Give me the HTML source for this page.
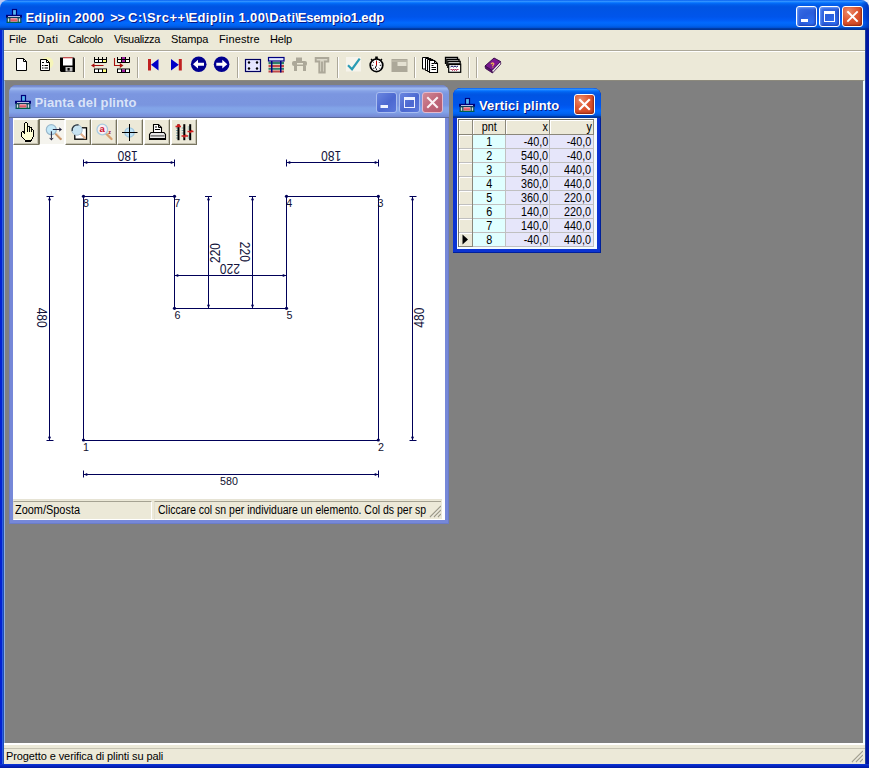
<!DOCTYPE html>
<html><head><meta charset="utf-8"><title>Ediplin 2000</title>
<style>
*{box-sizing:border-box;margin:0;padding:0}
html,body{width:869px;height:768px;overflow:hidden;background:#0831d9}
body{position:relative;font-family:"Liberation Sans",sans-serif;font-size:11px;color:#000}
.abs{position:absolute}
svg{position:absolute;overflow:visible}
#frame{left:0;top:0;width:869px;height:768px;background:linear-gradient(to right,#0322d2 0,#0322d2 2px,#2d5fe0 2px,#2d5fe0 3px,#1f4db6 3px,#1f4db6 4px,#0a33e0 4px,#0a33e0 865px,#1f3f9a 865px,#1f3f9a 866px,#0016a2 866px)}
#frameb{left:0;top:764px;width:869px;height:4px;background:linear-gradient(to bottom,#0c38d6,#0322c0 50%,#001a9c)}
#title{left:0;top:0;width:869px;height:30px;border-radius:8px 8px 0 0;
 background:linear-gradient(to bottom,#0058ee 0%,#3593ff 4%,#288eff 6%,#127dff 8%,#036ffc 10%,#0262ee 14%,#0057e5 20%,#0054e3 24%,#0055eb 56%,#005bf5 66%,#026afe 76%,#0062ef 86%,#0052d6 92%,#0040ab 94%,#003092 100%)}
.ttext{position:absolute;font-weight:bold;color:#fff;white-space:nowrap;text-shadow:1px 1px 0 #0a1883}
#menubar{left:4px;top:30px;width:861px;height:20px;background:#ece9d8}
.mi{position:absolute;top:3px;white-space:nowrap;font-size:11px}
#toolbar{left:4px;top:50px;width:861px;height:31px;background:#ece9d8;border-top:1px solid #aca899}
#toolbar:before{content:"";position:absolute;left:0;top:0;width:100%;height:1px;background:#fff}
#mdi{left:4px;top:80px;width:861px;height:663px;background:#808080;border-top:1px solid #8c897c;border-left:1px solid #8fafdd;border-right:2px solid #f0feff}
#status{left:4px;top:743px;width:861px;height:21px;background:#ece9d8;border-top:2px solid #fff}
#status:before{content:"";position:absolute;left:0;top:3px;width:100%;height:1px;background:#c5c2b2}
.sep{position:absolute;top:6px;width:2px;height:21px;border-left:1px solid #aca899;border-right:1px solid #fff}
.cbtn{position:absolute;width:21px;height:21px;border:1px solid #fff;border-radius:3px}
.cb-blue{background:radial-gradient(circle at 75% 80%,#2f6df0 0%,#2a5ddb 45%,#3a6fe8 100%);box-shadow:inset 1px 1px 2px #6f9df8, inset -1px -1px 2px #1c3eb0}
.cb-red{background:radial-gradient(circle at 30% 25%,#ea8c6c 0%,#de5630 45%,#c8401e 100%);box-shadow:inset -1px -1px 2px #8f2610}
</style></head><body>
<svg width="0" height="0" style="left:0;top:0"><defs>
<g id="appico">
<rect x="6.500" y="1.500" width="4" height="6" fill="#58b8f0" stroke="#000078" stroke-width="1.200"/>
<rect x="0" y="6.800" width="16" height="3" fill="#000078"/>
<rect x="2" y="8" width="12" height=".8" fill="#e8eeff"/>
<rect x="1.200" y="9.800" width="13.600" height="4.600" fill="#d8e0e0" stroke="#003c48" stroke-width="1.100"/>
<rect x="4.300" y="10.300" width="7" height="3.200" fill="#e05868"/>
<rect x="4.300" y="10.300" width="7" height="1" fill="#f4b0b8"/>
<rect x="3.300" y="9.800" width="1" height="4.600" fill="#003c48"/><rect x="11.700" y="9.800" width="1" height="4.600" fill="#003c48"/>
<rect x=".800" y="13.900" width="14.400" height="1.100" fill="#006048"/>
</g>
</defs></svg>
<div id="frame" class="abs"></div><div id="frameb" class="abs"></div>
<div class="abs" style="left:0;top:0;width:8px;height:8px;background:#b9c8f5"></div><div class="abs" style="right:0;top:0;width:8px;height:8px;background:#e8eefc"></div>
<div id="title" class="abs"></div><div class="abs" style="left:861px;top:0;width:8px;height:30px;border-radius:0 8px 0 0;background:linear-gradient(to right,rgba(0,20,150,0),rgba(0,20,150,.55))"></div>
<svg width="16" height="16" viewBox="0 0 16 16" style="left:6px;top:8px"><use href="#appico"/></svg>
<div class="ttext" id="maintitle" style="left:0;top:10px;font-size:13px;width:400px;height:16px">
<span class="abs" style="left:25.400px;letter-spacing:.27px">Ediplin 2000</span>
<span class="abs" style="left:110.300px;letter-spacing:-.3px">&gt;&gt;</span>
<span class="abs" style="left:128.100px;letter-spacing:.5px">C:\Src++\</span>
<span class="abs" style="left:188.500px;letter-spacing:.38px">Ediplin 1.00\Dati\</span>
<span class="abs" style="left:297.700px;letter-spacing:-.15px">Esempio1.edp</span>
</div>
<div class="cbtn cb-blue" style="left:796px;top:6px"><svg width="21" height="21" style="left:-1px;top:-1px"><rect x="5" y="13" width="7" height="3" fill="#fff"/></svg></div>
<div class="cbtn cb-blue" style="left:819px;top:6px"><svg width="21" height="21" style="left:-1px;top:-1px"><rect x="5.5" y="6.5" width="10" height="9" fill="none" stroke="#fff"/><rect x="5" y="5" width="11" height="3" fill="#fff"/></svg></div>
<div class="cbtn cb-red" style="left:842px;top:6px"><svg width="21" height="21" style="left:-1px;top:-1px"><path d="M6 6 L15 15 M15 6 L6 15" stroke="#fff" stroke-width="1.900" stroke-linecap="square"/></svg></div>
<div id="menubar" class="abs">
<span class="mi" style="left:5px">File</span>
<span class="mi" style="left:33px;letter-spacing:.5px">Dati</span>
<span class="mi" style="left:64px;letter-spacing:-.25px">Calcolo</span>
<span class="mi" style="left:110px;letter-spacing:-.33px">Visualizza</span>
<span class="mi" style="left:167px;letter-spacing:-.1px">Stampa</span>
<span class="mi" style="left:215px;letter-spacing:.14px">Finestre</span>
<span class="mi" style="left:266px;letter-spacing:-.17px">Help</span>
</div>
<div id="toolbar" class="abs">
<div class="sep" style="left:79px"></div>
<div class="sep" style="left:133px"></div>
<div class="sep" style="left:233px"></div>
<div class="sep" style="left:333px"></div>
<div class="sep" style="left:410px"></div>
<div class="sep" style="left:464px"></div>
<div class="sep" style="left:472px"></div>
</div>
<div id="mdi" class="abs"></div>
<div id="status" class="abs"><span class="abs" id="stxt" style="left:2px;top:5px;white-space:nowrap;letter-spacing:-.1px">Progetto e verifica di plinti su pali</span>
<svg width="13" height="13" style="right:1px;bottom:1px"><path d="M13 1 L2 12 M13 5 L6 12 M13 9 L10 12" stroke="#fff" stroke-width="1"/><path d="M12 1 L1 12 M12 5 L5 12 M12 9 L9 12" stroke="#a5a290" stroke-width="1.300"/></svg></div>
<svg width="869" height="768" viewBox="0 0 869 768" style="left:0;top:0;pointer-events:none" shape-rendering="auto">
<!-- new -->
<path d="M16.500 58.500 H23.500 L26.500 61.500 V70.500 H16.500 Z" fill="#fff" stroke="#000" stroke-width="1"/>
<path d="M23.500 58.500 V61.500 H26.500" fill="none" stroke="#000" stroke-width="1"/>
<!-- doc with lines -->
<ellipse cx="47" cy="63" rx="6.5" ry="6" fill="#ffffa0" opacity=".55"/>
<path d="M40.500 59.500 H46.500 L49.500 62.500 V70.500 H40.500 Z" fill="#fff" stroke="#000" stroke-width="1"/>
<path d="M46.500 59.500 V62.500 H49.500" fill="none" stroke="#000" stroke-width="1"/>
<path d="M42 62.5 H44 M42 65.5 H43.5 M44.5 65.5 H48 M42 68 H43.5 M44.5 68 H48" stroke="#000" stroke-width="1"/>
<!-- save -->
<path d="M60 57.5 H74 L75 58.5 V72 H61 L60 71 Z" fill="#000"/>
<rect x="63" y="58" width="9.5" height="7.5" fill="#fff"/>
<rect x="63" y="57.3" width="9.5" height="1" fill="#e04040"/>
<rect x="65.5" y="67" width="7" height="4.5" fill="#c0c0c0"/>
<rect x="67.5" y="68" width="2.2" height="2.6" fill="#000"/>
<!-- table-arrow icon 1 -->
<g>
<rect x="94" y="59" width="13" height="3.5" fill="#fff"/><rect x="102.5" y="59" width="4" height="3.5" fill="#ffff80"/>
<path d="M94.5 57 V62.5 H106.5 V57 M98.5 57 V62.5 M102.5 57 V62.5 M94.5 59.5 H106.5" fill="none" stroke="#000" stroke-width="1"/>
<rect x="94.5" y="69" width="12" height="3.5" fill="#fff" stroke="#000"/><rect x="102.5" y="69.5" width="3.5" height="2.5" fill="#ffff80"/>
<path d="M98.5 69 V72.5 M102.5 69 V72.5" stroke="#000"/>
<path d="M91 65.500 L94.500 63.200 V65 H103.500 V66 H94.500 V67.800 Z" fill="#a81010"/>
</g>
<!-- table-arrow icon 2 -->
<g>
<rect x="117.5" y="59" width="12" height="3.5" fill="#fff"/><rect x="121.5" y="57" width="4" height="5.5" fill="#a020a0"/>
<path d="M117.5 57 V62.5 H129.5 V57 M121.5 57 V62.5 M125.5 57 V62.5 M117.5 59.5 H129.5" fill="none" stroke="#000" stroke-width="1"/>
<rect x="117.5" y="69" width="12" height="3.5" fill="#fff" stroke="#000"/><rect x="121.5" y="69.5" width="4" height="2.5" fill="#a020a0"/>
<path d="M121.500 69 V72.5 M125.5 69 V72.5" stroke="#000"/>
<path d="M114.500 58 V65.500 H120" fill="none" stroke="#a81010" stroke-width="1.100"/>
<path d="M123.500 65.500 L119.800 63 V68 Z" fill="#a81010"/>
</g>
<!-- first -->
<rect x="148" y="59" width="3" height="11.500" fill="#c02020"/>
<path d="M158.500 59 V70.500 L151 64.750 Z" fill="#0000c8"/>
<!-- last -->
<rect x="178.800" y="59" width="3" height="11.500" fill="#c02020"/>
<path d="M171 59 V70.500 L178.800 64.750 Z" fill="#0000c8"/>
<!-- left circle -->
<circle cx="198.700" cy="64.200" r="7.800" fill="#000090"/>
<path d="M193 64.200 L198 59.800 V62.700 H204 V65.700 H198 V68.600 Z" fill="#fff"/>
<!-- right circle -->
<circle cx="221.600" cy="64.200" r="7.800" fill="#000090"/>
<path d="M227.300 64.200 L222.300 59.800 V62.700 H216.300 V65.700 H222.300 V68.600 Z" fill="#fff"/>
<!-- rect 4 dots -->
<rect x="245.500" y="59.500" width="15" height="12" fill="#e6e6ff" stroke="#000060" stroke-width="1.200"/>
<circle cx="249" cy="62.500" r="1.200" fill="#000"/><circle cx="257" cy="62.500" r="1.200" fill="#000"/>
<circle cx="249" cy="68.500" r="1.200" fill="#000"/><circle cx="257" cy="68.500" r="1.200" fill="#000"/>
<!-- striped structure -->
<g>
<rect x="268.500" y="57.500" width="15.500" height="3.500" fill="#e0e8ff" stroke="#000080" stroke-width="1.200"/>
<rect x="268.500" y="62" width="15.500" height="2.200" fill="#2e7d6b"/>
<rect x="268.500" y="65" width="15.500" height="2.300" fill="#c04848"/>
<rect x="268.500" y="68" width="15.500" height="1.800" fill="#2e7d6b"/>
<rect x="268.500" y="70.500" width="15.500" height="2" fill="#c04848"/>
<rect x="271" y="61" width="1.500" height="11.500" fill="#000080"/>
<rect x="280" y="61" width="1.500" height="11.500" fill="#000080"/>
</g>
<!-- gray plinth (disabled) -->
<g fill="#aca899">
<rect x="296" y="57.500" width="6" height="3.500"/>
<rect x="292" y="61" width="15" height="5" rx="2"/>
<rect x="294" y="66" width="3" height="5"/><rect x="303" y="66" width="3" height="5"/>
<rect x="297" y="63" width="6" height="1.500" fill="#ece9d8"/>
</g>
<!-- gray double T -->
<g fill="#dcd9ca" stroke="#aca899" stroke-width="1.900">
<path d="M315.700 58 H328.300 V61.500 H324.700 V72.500 H319.300 V61.500 H315.700 Z M322 61.500 V72.500"/>
</g>
<!-- check -->
<rect x="346" y="57" width="15" height="14.500" fill="#f6f4ec"/>
<path d="M348 65.300 L352 69.200 L359.700 58.600" fill="none" stroke="#2a9cb4" stroke-width="2.200"/>
<!-- stopwatch -->
<g>
<rect x="375.200" y="56.500" width="2.600" height="2.500" fill="#000"/>
<path d="M371 59 L372.500 60.500 M382 59 L380.500 60.500" stroke="#000" stroke-width="1.400"/>
<circle cx="376.500" cy="65.300" r="6.300" fill="#fff" stroke="#000" stroke-width="1.700"/>
<path d="M376.500 60.500 V62 M376.500 68.500 V70 M371.700 65.300 H373.200 M379.800 65.300 H381.300 M373.200 62 L374 62.800 M379.800 62 L379 62.800 M373.200 68.600 L374 67.800 M379.800 68.600 L379 67.800" stroke="#000" stroke-width=".9"/>
<path d="M376.500 65.300 V61" stroke="#c00000" stroke-width="1"/><path d="M376.500 65.300 L375 68.500" stroke="#000" stroke-width="1"/>
</g>
<!-- gray window icon -->
<rect x="391.500" y="59" width="16" height="13" fill="#aca899"/>
<rect x="397.500" y="62" width="9" height="4" fill="#e4e1d2"/>
<rect x="391.500" y="60.500" width="16" height="1" fill="#c9c6b6"/>
<!-- stacked docs -->
<g stroke="#000" stroke-width="1" fill="#fff">
<path d="M422.500 57.500 H428.500 L430 59 V69 H422.500 Z"/>
<path d="M425.500 58.500 H431 L432.500 60 V70.500 H425.500 Z"/>
<path d="M427.500 59.500 H433 L435 61.500 V71.500 H427.500 Z"/>
<path d="M429.500 60.500 H434.500 L437.500 63.500 V72.500 H429.500 Z" stroke-width="1.100"/>
<path d="M434.500 60.500 V63.500 H437.500" fill="none"/>
<path d="M431.500 63.500 H434 M431.500 65.500 H433.500 M431.500 67.500 H436 M431.500 69.500 H436" fill="none" stroke-width="1"/>
</g>
<!-- stacked windows -->
<g stroke="#000" stroke-width="1" fill="#fff">
<path d="M445.500 64 V57.500 H457.500 V59" stroke-width="1.300"/>
<path d="M446.800 66 V59.500 H459 V61" stroke-width="1.300"/>
<path d="M447.800 68 V61.500 H460.200 V63.500" stroke-width="1.300"/>
<rect x="448.700" y="64" width="12" height="8.300" stroke-width="1.200"/>
<rect x="448.700" y="63.500" width="12" height="1.600" fill="#000" stroke="none"/>
<path d="M450.500 67 L452 66 L453.500 67 L455 66 L456.500 67 L458 66" stroke="#101060" stroke-width="1" fill="none"/>
<path d="M450.500 70 L451.500 69 L452.500 70.500 L453.500 69 L454.500 70.500 L455.500 69 L456.500 70.500 L457.500 69 L458.500 70" stroke="#b01848" stroke-width="1" fill="none"/>
</g>
<!-- help book -->
<g>
<path d="M485 66 L494 58 L500.500 61.500 L492 70.500 Z" fill="#7a1890" stroke="#3a0a4a" stroke-width="1"/>
<path d="M485 66 L492 70.500 L492.500 73 L485.500 68.500 Z" fill="#5a1070" stroke="#3a0a4a" stroke-width=".8"/>
<path d="M492 70.500 L500.500 61.500 L500.800 64 L492.500 73 Z" fill="#f0e8f0" stroke="#3a0a4a" stroke-width=".8"/>
<text x="490.500" y="67.500" font-family="Liberation Sans, sans-serif" font-size="7" font-weight="bold" fill="#ffd040" transform="rotate(-8 492 65)">?</text>
</g>
</svg>

<style>
.win{position:absolute;border-radius:8px 8px 0 0}
.win1{left:9px;top:85px;width:440px;height:439px;background:#7688d8;box-shadow:inset 1px 0 0 #6b7cc8, inset -1px -1px 0 #6b7cc8}
.win1 .tb{position:absolute;left:0;top:0;width:100%;height:33px;border-radius:8px 8px 0 0;border-bottom:1px solid #5d6c9c;
 background:linear-gradient(to bottom,#6f84c4 0px,#7e93d6 2px,#9db8f0 3px,#9bb6ee 4px,#86a2e6 6px,#7b96e0 9px,#7a95df 20px,#82a4e8 23px,#82a3e7 27px,#7a92dc 30px,#7488d2 32px)}
.win1 .client{position:absolute;left:4px;top:33px;width:432px;height:402px;background:#fff}
.ib{position:absolute;width:21px;height:21px;border-radius:3px;border:1px solid #a9bdf0}
.ib-b{background:linear-gradient(135deg,#6a86e0 0%,#4c68d0 55%,#5a78dc 100%)}
.ib-r{background:linear-gradient(135deg,#d08a98 0%,#be6478 55%,#b45a70 100%);border-color:#e4b8cc}
.tbtn{position:absolute;top:1px;width:26px;height:26px;background:#ece9d8;border-top:1px solid #fff;border-left:1px solid #fff;border-right:1px solid #77745f;border-bottom:1px solid #77745f;box-shadow:inset -1px -1px 0 #c5c2b2}
.tbtn.down{background:#f5f4ee;border-top:1px solid #77745f;border-left:1px solid #77745f;border-right:1px solid #fff;border-bottom:1px solid #fff;box-shadow:none}
.sbp{position:absolute;top:1px;height:19px;border-top:1px solid #a5a292;border-left:1px solid #e2dfd0;border-right:1px solid #fff;border-bottom:1px solid #fff;white-space:nowrap;overflow:hidden;font-size:12px;line-height:16px;padding-left:1px}
.sbp span{display:inline-block;transform-origin:0 50%}
</style>
<div class="win win1">
 <div class="tb"></div>
 <svg width="16" height="16" viewBox="0 0 16 16" style="left:6px;top:9px"><use href="#appico"/></svg>
 <div class="ttext" id="t1" style="left:25.500px;top:10.300px;font-size:13px;color:#d9e3f8;text-shadow:none;letter-spacing:.1px">Pianta del plinto</div>
 <div class="ib ib-b" style="left:367px;top:7px"><svg width="21" height="21" style="left:-1px;top:-1px"><rect x="4.500" y="13" width="7.500" height="3" fill="#eef2ff"/></svg></div>
 <div class="ib ib-b" style="left:390px;top:7px"><svg width="21" height="21" style="left:-1px;top:-1px"><rect x="5.500" y="6.500" width="10" height="9" fill="none" stroke="#eef2ff"/><rect x="5" y="5" width="11" height="3" fill="#eef2ff"/></svg></div>
 <div class="ib ib-r" style="left:413px;top:7px"><svg width="21" height="21" style="left:-1px;top:-1px"><path d="M6 6 L15 15 M15 6 L6 15" stroke="#fbf0f4" stroke-width="2.100" stroke-linecap="square"/></svg></div>
 <div class="client">
  <div class="abs" style="left:0;top:0;width:185px;height:27px;background:#fff">
   <div class="tbtn" style="left:0px"></div>
   <div class="tbtn down" style="left:26px"></div>
   <div class="tbtn" style="left:52px"></div>
   <div class="tbtn" style="left:78px"></div>
   <div class="tbtn" style="left:104px"></div>
   <div class="tbtn" style="left:130.5px"></div>
   <div class="tbtn" style="left:157.5px"></div>
  </div>
  <div class="abs" style="left:0;top:381px;width:429px;height:20px;background:#ece9d8;border-top:1px solid #e6e3d4">
   <div class="sbp" style="left:0;width:139px"><span id="sb1" style="transform:scaleX(.911)">Zoom/Sposta</span></div>
   <div class="sbp" style="left:141px;width:287px;padding-left:3px;border-right:none"><span id="sb2" style="transform:scaleX(.874)">Cliccare col sn per individuare un elemento. Col ds per sp</span></div>
   <svg width="13" height="13" style="right:0px;bottom:1px"><path d="M13 1 L2 12 M13 5 L6 12 M13 9 L10 12" stroke="#fff" stroke-width="1"/><path d="M12 1 L1 12 M12 5 L5 12 M12 9 L9 12" stroke="#9e9b8a" stroke-width="1.300"/></svg>
  </div>
 </div>
</div>
<svg width="869" height="768" viewBox="0 0 869 768" style="left:0;top:0;pointer-events:none">
<!-- hand -->
<g shape-rendering="crispEdges">
<path d="M24.500 133.500 V123.500 H25.500 V122.500 H26.500 V123.500 H27.500 V126.500 H29.500 V127.500 H31.500 V128.500 H32.500 V129.500 H33.500 V136.500 H32.500 V138.500 H31.500 V140.500 H25.500 V139.500 H24.500 V138.500 H23.500 V137.500 H22.500 V136.500 H21.500 V131.500 H23.500 V132.500 H24.500 Z" fill="#ffffd4" stroke="none"/>
<path d="M24 123 h1 v11 h-1 z M25 122 h2 v1 h-2 z M27 123 h1 v9 h-1 z M28 126 h2 v1 h-2 z M29 127 h1 v5 h-1 z M30 127 h2 v1 h-2 z M31 128 h1 v4 h-1 z M32 129 h1 v1 h-1 z M33 130 h1 v7 h-1 z M32 137 h1 v2 h-1 z M31 139 h1 v2 h-1 z M22 131 h2 v1 h-2 z M21 132 h1 v5 h-1 z M23 132 h1 v1 h-1 z M22 137 h1 v1 h-1 z M23 138 h1 v1 h-1 z M24 139 h1 v1 h-1 z M25 140 h1 v1 h-1 z" fill="#000"/>
<rect x="25" y="140" width="6" height="2" fill="#000"/>
</g>
<!-- zoom with arrows -->
<path d="M56 134 L60.700 139" stroke="#c89468" stroke-width="2.400" stroke-linecap="round"/>
<path d="M56 133 L61 138" stroke="#f0c8b0" stroke-width=".8"/>
<circle cx="51.300" cy="129.700" r="5" fill="#c4e8f8" stroke="#9ab8cc" stroke-width="1.200"/>
<path d="M52.800 129.500 H60 M51.400 131.300 V138.500" stroke="#20203c" stroke-width="1" fill="none"/>
<path d="M62 129.500 L59 127.200 L59.600 129.500 L59 131.800 Z M51.400 140.600 L49 137.800 L51.400 138.400 L53.800 137.800 Z" fill="#20203c"/>
<!-- zoom window -->
<rect x="74.800" y="127.800" width="11.700" height="11.400" fill="#fff" stroke="#000" stroke-width="1.300"/>
<path d="M80 133 L85 138" stroke="#e0b090" stroke-width="2.200" stroke-linecap="round"/>
<circle cx="77" cy="130" r="5.200" fill="#c8e4f2" stroke="#a8c0d0" stroke-width="1"/>
<path d="M72.200 131 A5.200 5.200 0 0 1 78.500 125" stroke="#303840" stroke-width="1.400" fill="none"/>
<!-- zoom text -->
<path d="M106 133.500 L111.500 139" stroke="#d8a070" stroke-width="2.300" stroke-linecap="round"/>
<circle cx="102.300" cy="129.500" r="5.300" fill="#fbeef2" stroke="#a8cce0" stroke-width="1.300"/>
<text x="99.600" y="132.300" style="font-family:'Liberation Sans',sans-serif" font-size="9.500" font-weight="bold" fill="#c81030">a</text>
<text x="108.300" y="133.500" style="font-family:'Liberation Sans',sans-serif" font-size="5.500" font-weight="bold" fill="#a01030">z</text>
<!-- crosshair -->
<circle cx="129.500" cy="132.400" r="4.600" fill="#bfe2f5" stroke="#9cc6e0" stroke-width="1.300"/>
<path d="M122 132.500 H137.500 M129.500 124 V141" stroke="#000" stroke-width="1"/>
<!-- printer -->
<path d="M153.500 132.500 V124.500 H158.500 L161.500 127.500 V132.500" fill="#fff" stroke="#000" stroke-width="1.100"/>
<path d="M158.500 124.500 V127.500 H161.500" fill="none" stroke="#000"/>
<path d="M155 127 H157 M155 129.500 H160" stroke="#000" stroke-width="1"/>
<path d="M151 132.500 H164 L165.500 134.500 V139.500 H149.500 V134.500 Z" fill="#e8e8e8" stroke="#000" stroke-width="1.100"/>
<rect x="150.500" y="135" width="14" height="1.700" fill="#808080"/>
<rect x="149.500" y="138" width="16" height="1.800" fill="#000"/>
<!-- bars -->
<g>
<path d="M176 128 H178 M176 130.500 H178 M176 133 H178 M176 135.500 H178 M176 138 H178 M181.700 128 H183.700 M181.700 130.500 H183.700 M181.700 133 H183.700 M187.700 127 H189.700 M187.700 129 H189.700 M187.700 136 H189.700 M187.700 138 H189.700" stroke="#7098a0" stroke-width=".9"/>
<rect x="177.500" y="124.200" width="2" height="16" fill="#000"/>
<rect x="183.300" y="124.200" width="2" height="16" fill="#000"/>
<rect x="189.200" y="124.200" width="2" height="16" fill="#000"/>
<path d="M175.500 126.500 H181 M178.500 124.500 L176.500 127 M178.500 124.500 L180.500 127" stroke="#d02020" stroke-width="1.300" fill="none"/>
<path d="M187.500 131.500 H193.500 M190 133 L192 130" stroke="#d02020" stroke-width="1.300"/>
<path d="M181.500 136 H188 M184 137.500 L186 134.500" stroke="#d02020" stroke-width="1.300"/>
</g>
</svg>
<svg width="869" height="768" viewBox="0 0 869 768" style="left:0;top:0" font-family="Liberation Sans, sans-serif" font-size="10.7">
<g fill="none" stroke="#000058" stroke-width="1">
<!-- plinth outline -->
<path d="M83.500 440.500 H378.500 V196.500 H286.500 V308.500 H174.500 V196.500 H83.500 Z"/>
<!-- top dims 180 -->
<path d="M83.500 162.500 H174.500 M83.500 159.500 V166.500 M174.500 159.500 V166.500"/>
<path d="M286.500 162.500 H378.500 M286.500 159.500 V166.500 M378.500 159.500 V166.500"/>
<!-- left / right 480 -->
<path d="M49.500 196.500 V440.500 M46.500 196.500 H53.500 M46.500 440.500 H53.500"/>
<path d="M412.500 196.500 V440.500 M409.500 196.500 H416.500 M409.500 440.500 H416.500"/>
<!-- inner 220 vertical dims -->
<path d="M208.500 196.500 V308.500 M205 196.500 H212 M252.500 196.500 V308.500 M249 196.500 H256"/>
<!-- inner 220 horizontal dim -->
<path d="M174.500 275.500 H286.500"/>
<!-- bottom 580 -->
<path d="M83.500 474.500 H378.500 M83.500 470.500 V477.500 M378.500 470.500 V477.500"/>
</g>
<g fill="#000058">
<circle cx="83.500" cy="196.300" r="1.600"/><circle cx="174.500" cy="196.300" r="1.600"/><circle cx="286.500" cy="196.300" r="1.600"/><circle cx="378.300" cy="196.300" r="1.600"/>
<circle cx="174.500" cy="308.300" r="1.600"/><circle cx="286.500" cy="308.300" r="1.600"/>
<circle cx="83.500" cy="440" r="1.600"/><circle cx="378.300" cy="440" r="1.600"/>
<!-- arrow dots -->
<circle cx="86.500" cy="162.500" r="1.200"/><circle cx="171.500" cy="162.500" r="1.200"/>
<circle cx="289.500" cy="162.500" r="1.200"/><circle cx="375.500" cy="162.500" r="1.200"/>
<circle cx="49.500" cy="199.500" r="1.200"/><circle cx="49.500" cy="437.500" r="1.200"/>
<circle cx="412.500" cy="199.500" r="1.200"/><circle cx="412.500" cy="437.500" r="1.200"/>
<circle cx="208.500" cy="199.500" r="1.200"/><circle cx="208.500" cy="305.500" r="1.200"/>
<circle cx="252.500" cy="199.500" r="1.200"/><circle cx="252.500" cy="305.500" r="1.200"/>
<circle cx="177.500" cy="275.500" r="1.200"/><circle cx="283.500" cy="275.500" r="1.200"/>
<circle cx="86.500" cy="474.500" r="1.200"/><circle cx="375.500" cy="474.500" r="1.200"/>
</g>
<g fill="#101030">
<text x="83" y="206.700">8</text><text x="174.300" y="206.700">7</text><text x="286.300" y="206.700">4</text><text x="377.500" y="206.700">3</text>
<text x="174.500" y="319.300">6</text><text x="286.500" y="319.300">5</text>
<text x="83" y="451.300">1</text><text x="378" y="451.300">2</text>
<text x="229" y="485.300" text-anchor="middle" id="d580">580</text>
<g font-size="14" text-anchor="middle" fill="#14143c">
<text transform="translate(127.700 155.700) rotate(180) scale(.857 1)" y="5">180</text>
<text transform="translate(331.200 155.700) rotate(180) scale(.857 1)" y="5">180</text>
<text transform="translate(229.900 269) rotate(180) scale(.857 1)" y="5">220</text>
<text transform="translate(215.200 253) rotate(-90) scale(.857 1)" y="5">220</text>
<text transform="translate(245 251.800) rotate(90) scale(.857 1)" y="5">220</text>
<text transform="translate(42 317.700) rotate(90) scale(.857 1)" y="5">480</text>
<text transform="translate(419.300 317.700) rotate(-90) scale(.857 1)" y="5">480</text>
</g>
</g>
</svg>
<style>
.win2{left:453px;top:88px;width:148px;height:165px;background:#0b33d2;box-shadow:inset -1px -1px 0 #00209a, inset 1px 0 0 #0831d9}
.win2 .tb{position:absolute;left:0;top:0;width:100%;height:30px;border-radius:8px 8px 0 0;
 background:linear-gradient(to bottom,#0058ee 0%,#3593ff 4%,#288eff 6%,#127dff 8%,#036ffc 10%,#0262ee 14%,#0057e5 20%,#0054e3 24%,#0055eb 56%,#005bf5 66%,#026afe 76%,#0062ef 86%,#0052d6 92%,#0040ab 94%,#003092 100%)}
.win2 .client{position:absolute;left:4px;top:30px;width:140px;height:131px;background:#f4fbff}
.grid{position:absolute;left:1px;top:1px;width:136px;height:128px;background:#c0c0c0;border-left:1px solid #716f64;border-top:1px solid #716f64}
.gdk{position:absolute;background:#8a877a}
.gc{position:absolute;height:13px;font-size:12px;line-height:14px;white-space:nowrap;overflow:hidden}
.gc span{display:inline-block;transform:scaleX(.9);transform-origin:100% 50%}
.cp span,.gh.c span{transform-origin:50% 50%}
.gh{background:#ece9d8;box-shadow:inset 1px 1px 0 #fff;overflow:visible !important}
.ci{left:1px;width:13px;background:#ece9d8;box-shadow:inset 1px 1px 0 #fff}
.cp{left:15px;width:32px;background:#e0ffff;text-align:center}
.cx{left:48px;width:43px;background:#e6e6fa;text-align:right;padding-right:1px}
.cy{left:92px;width:43px;background:#e6e6fa;text-align:right;padding-right:1.500px}
.gl{position:absolute;background:#c0c0c0}
</style>
<div class="win win2">
 <div class="tb"></div>
 <svg width="16" height="16" viewBox="0 0 16 16" style="left:6px;top:8.500px"><use href="#appico"/></svg>
 <div class="ttext" id="t2" style="left:26px;top:9.500px;font-size:13px;letter-spacing:.17px">Vertici plinto</div>
 <div class="cbtn cb-red" style="left:121px;top:6px"><svg width="21" height="21" style="left:-1px;top:-1px"><path d="M6 6 L15 15 M15 6 L6 15" stroke="#fff" stroke-width="2.200" stroke-linecap="square"/></svg></div>
 <div class="client"><div class="grid" id="grid"><div class="abs" style="left:-1px;top:-1px;width:137px;height:128px"><div class="gdk" style="left:1px;top:15px;width:135px;height:1px"></div><div class="gdk" style="left:14px;top:1px;width:1px;height:127px"></div><div class="gdk" style="left:1px;top:127px;width:14px;height:1px"></div><div class="gdk" style="left:47px;top:1px;width:1px;height:15px"></div><div class="gdk" style="left:91px;top:1px;width:1px;height:15px"></div><div class="gdk" style="left:135px;top:1px;width:1px;height:15px"></div>
<div class="gc gh" style="left:1px;top:1px;width:13px;height:14px"></div>
<div class="gc gh" style="left:15px;top:1px;width:32px;height:14px;text-align:center;line-height:15px"><span style="transform-origin:50% 50%">pnt</span></div>
<div class="gc gh" style="left:48px;top:1px;width:43px;height:14px;text-align:right;padding-right:1px;line-height:15px"><span>x</span></div>
<div class="gc gh" style="left:92px;top:1px;width:43px;height:14px;text-align:right;padding-right:1.500px;line-height:15px"><span>y</span></div>
<div class="gc ci" style="top:16px"></div><div class="gc cp" style="top:16px"><span>1</span></div><div class="gc cx" style="top:16px"><span>-40,0</span></div><div class="gc cy" style="top:16px"><span>-40,0</span></div>
<div class="gc ci" style="top:30px"></div><div class="gc cp" style="top:30px"><span>2</span></div><div class="gc cx" style="top:30px"><span>540,0</span></div><div class="gc cy" style="top:30px"><span>-40,0</span></div>
<div class="gc ci" style="top:44px"></div><div class="gc cp" style="top:44px"><span>3</span></div><div class="gc cx" style="top:44px"><span>540,0</span></div><div class="gc cy" style="top:44px"><span>440,0</span></div>
<div class="gc ci" style="top:58px"></div><div class="gc cp" style="top:58px"><span>4</span></div><div class="gc cx" style="top:58px"><span>360,0</span></div><div class="gc cy" style="top:58px"><span>440,0</span></div>
<div class="gc ci" style="top:72px"></div><div class="gc cp" style="top:72px"><span>5</span></div><div class="gc cx" style="top:72px"><span>360,0</span></div><div class="gc cy" style="top:72px"><span>220,0</span></div>
<div class="gc ci" style="top:86px"></div><div class="gc cp" style="top:86px"><span>6</span></div><div class="gc cx" style="top:86px"><span>140,0</span></div><div class="gc cy" style="top:86px"><span>220,0</span></div>
<div class="gc ci" style="top:100px"></div><div class="gc cp" style="top:100px"><span>7</span></div><div class="gc cx" style="top:100px"><span>140,0</span></div><div class="gc cy" style="top:100px"><span>440,0</span></div>
<div class="gc ci" style="top:114px"><svg width="13" height="13" style="left:0;top:0"><path d="M3.500 1.500 V11.500 L9 6.500 Z" fill="#000"/></svg></div><div class="gc cp" style="top:114px"><span>8</span></div><div class="gc cx" style="top:114px"><span>-40,0</span></div><div class="gc cy" style="top:114px"><span>440,0</span></div>
 </div></div></div>
</div>
</body></html>
